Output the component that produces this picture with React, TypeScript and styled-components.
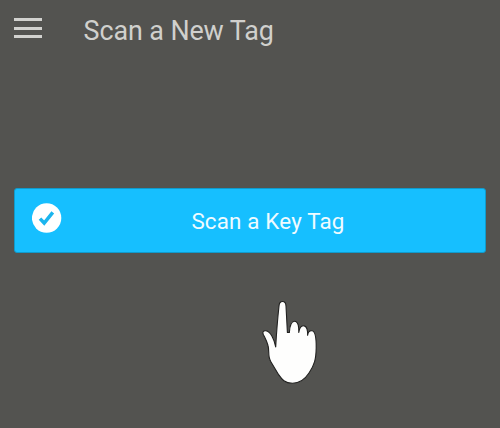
import React from "react";
import styled, { createGlobalStyle } from "styled-components";

const GlobalStyle = createGlobalStyle`
  * { box-sizing: border-box; }
  body { margin: 0; background: #535350; font-family: Roboto, sans-serif; }
`;

const Screen = styled.main`
  position: relative;
  display: flex;
  flex-direction: column;
  gap: 128px;
  width: 500px;
  height: 428px;
  padding: 0 14px;
  overflow: hidden;
  background: #535350;
`;

const Header = styled.header`
  display: flex;
  align-items: flex-start;
  gap: 41px;
  height: 60px;
`;

const MenuButton = styled.button`
  display: grid;
  grid-template-rows: 3px 3px 3px;
  row-gap: 5.5px;
  width: 28px;
  margin: 18px 0 0;
  padding: 0;
  border: 0;
  background: none;
`;

const MenuBar = styled.span`
  background: #d2d2cf;
`;

const Title = styled.h1`
  margin: 14px 0 0;
  padding-left: 0.6px;
  color: #d0d0cd;
  font-size: 26.9px;
  font-weight: 400;
  line-height: 34px;
  letter-spacing: -0.1px;
  white-space: nowrap;
`;

const ScanButton = styled.button`
  display: grid;
  grid-template-columns: 30px 1fr 30px;
  align-items: center;
  width: 472px;
  height: 65px;
  padding: 0 16px;
  border: 1px solid #109bcc;
  border-radius: 3px;
  background: #16bfff;
  color: #effbff;
  font-family: inherit;
`;

const CheckIcon = styled.svg`
  width: 30px;
  height: 30px;
  margin-top: -5px;
  margin-left: 1px;
`;

const ButtonLabel = styled.span`
  margin-top: 1px;
  padding-left: 36px;
  font-size: 22.4px;
  line-height: 28px;
  letter-spacing: 0.16px;
  text-align: center;
  white-space: nowrap;
`;

const Pointer = styled.svg`
  position: absolute;
  left: 250px;
  top: 290px;
  width: 80px;
  height: 105px;
  pointer-events: none;
`;

export default function App() {
  return (
    <>
      <GlobalStyle />
      <Screen>
        <Header>
          <MenuButton aria-label="Menu">
            <MenuBar />
            <MenuBar />
            <MenuBar />
          </MenuButton>
          <Title>Scan a New Tag</Title>
        </Header>
        <ScanButton>
          <CheckIcon viewBox="0 0 30 30" aria-hidden="true">
            <circle cx="14.6" cy="15" r="14.7" fill="#fff" />
            <path d="M8 15.6 12.2 20 20.8 9.4" fill="none" stroke="#1bb5ee" strokeWidth="3.5" />
          </CheckIcon>
          <ButtonLabel>Scan a Key Tag</ButtonLabel>
        </ScanButton>
        <Pointer viewBox="0 0 80 105" aria-hidden="true">
          <path
            d="M25.7 57 C26.6 41 27.8 27 29 16 C29.4 10 35.7 10 36 16 L37.4 42.5 L39.4 42.5 C39.7 37 40.3 31.3 44.5 31.3 C48.5 31.3 49 38 48.8 42.5 C49.4 38.8 50.5 35.8 53.3 35.8 C57 35.8 57.8 40.5 57.6 45.3 C58 42.5 59.6 40.5 62 40.8 C65.8 41.3 66.3 50 66.2 58 C66 69 64.5 75 59 83 C54.5 90 49 93.2 42.5 93.2 C34.5 93.2 32 89.5 28.5 84.5 L20.7 71.5 C17.5 66 19.6 61 18 55.5 C16.9 51 15.2 48.4 13.2 44.2 C12.2 41.8 13.6 40.5 15.8 40.8 C20.6 41.6 24.2 49 25.7 57 Z"
            fill="#fefefd"
            stroke="#20201f"
            strokeWidth="1.1"
            strokeLinejoin="round"
          />
        </Pointer>
      </Screen>
    </>
  );
}
